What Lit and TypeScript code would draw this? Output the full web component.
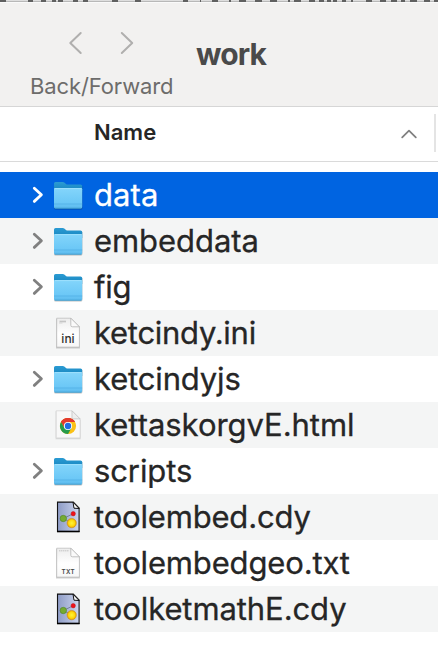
import { LitElement, html, css, svg } from "lit";
import { customElement, property } from "lit/decorators.js";

type Kind = "folder" | "ini" | "html" | "cdy" | "txt";
interface Entry { name: string; kind: Kind; spacing: number; selected?: boolean; }

const entries: Entry[] = [
  { name: "data", kind: "folder", spacing: 0.1, selected: true },
  { name: "embeddata", kind: "folder", spacing: -0.06 },
  { name: "fig", kind: "folder", spacing: -0.3 },
  { name: "ketcindy.ini", kind: "ini", spacing: -0.28 },
  { name: "ketcindyjs", kind: "folder", spacing: -0.15 },
  { name: "kettaskorgvE.html", kind: "html", spacing: -0.04 },
  { name: "scripts", kind: "folder", spacing: -0.1 },
  { name: "toolembed.cdy", kind: "cdy", spacing: -0.18 },
  { name: "toolembedgeo.txt", kind: "txt", spacing: -0.15 },
  { name: "toolketmathE.cdy", kind: "cdy", spacing: -0.09 },
];

// Start and end of each glyph foot peeking out above the window edge.
const feet = [[0,6],[28,33],[41,46],[52,56],[58,63],[73,78],[83,88],[112,118],[135,141],[183,188],[200,201],[212,218],[229,231],[239,246],[255,262],[270,277],[288,290],[294,301],[309,315],[319,324],[327,331],[333,337],[342,346],[351,353],[366,372],[380,386],[391,397],[401,405],[410,417],[424,430],[434,438]];

const folder = svg`
  <defs>
    <linearGradient id="front" x1="0" y1="0" x2="0" y2="1"><stop offset="0" stop-color="#83d5fb"/><stop offset=".75" stop-color="#6bc7f6"/><stop offset="1" stop-color="#5bb9ec"/></linearGradient>
    <linearGradient id="back" x1="0" y1="0" x2="0" y2="1"><stop offset="0" stop-color="#2b9bd3"/><stop offset="1" stop-color="#1684be"/></linearGradient>
  </defs>
  <path d="M4 9V31Q4 32.6 5.6 32.6H30.8Q32.4 32.6 32.4 31V9Z" fill="#000" opacity=".25"/>
  <path d="M4 6.6Q4 5 5.6 5H12.7Q13.8 5 14.6 5.7L16 6.9Q16.7 7.4 17.8 7.4H30.5Q32.2 7.4 32.2 9.1V15H4Z" fill="url(#back)"/>
  <path d="M4 12.3Q4 11.1 5.3 11.1H31Q32.2 11.1 32.2 12.3V30.1Q32.2 31.6 30.7 31.6H5.5Q4 31.6 4 30.1Z" fill="url(#front)"/>
  <path d="M4.5 11.6H31.7" stroke="#a4e2fc" stroke-width=".8"/>
  <path d="M4 27H32.2" stroke="#4dade2" stroke-width=".7"/>
  <path d="M5 31.2H31.2" stroke="#3c9bcd" stroke-width=".8"/>`;

const paper = svg`
  <defs><linearGradient id="page" x1="0" y1="0" x2="0" y2="1"><stop offset="0" stop-color="#ededed"/><stop offset=".55" stop-color="#fff"/><stop offset="1" stop-color="#f7f7f7"/></linearGradient></defs>
  <path d="M6 3.8H20.8L29.9 12.5V33.4H6Z" fill="#888" opacity=".4"/>
  <path d="M6.7 3.2H20.8L29.4 11.8V32.1H6.7Z" fill="url(#page)" stroke="#b9b9b9" stroke-width=".7"/>
  <path d="M20.8 3.2V10.3Q20.8 11.8 22.3 11.8H29.4Z" fill="#fafafa" stroke="#b4b4b4" stroke-width=".8"/>`;

const icons = {
  folder,
  ini: svg`${paper}<path d="M9.5 6.5H16" stroke="#c5c5c5" stroke-width="1.7"/><path d="M9 8H12.5" stroke="#d5d5d5" stroke-width="1"/><text class="ini" x="18" y="28" text-anchor="middle">ini</text>`,
  txt: svg`${paper}<path d="M9 5.8H19" stroke="#c4c4c4" stroke-width="1" stroke-dasharray="1.4 .5"/><text class="txt" x="18.2" y="28.7" text-anchor="middle">TXT</text>`,
  html: svg`
    <path d="M5.6 4.2H21.8L30.7 13V32.2H5.6Z" fill="#999" opacity=".3"/>
    <path d="M6.2 3.8H22L30.1 11.9V30.9H6.2Z" fill="#f8f8f8" stroke="#d2d2d2" stroke-width=".7"/>
    <path d="M22 3.8V10.7Q22 11.9 23.2 11.9H30.1Z" fill="#eee" stroke="#bbb" stroke-width=".7"/>
    <circle cx="18" cy="19" r="8.1" fill="#fbc116"/>
    <path d="M18 19L10.99 14.95A8.1 8.1 0 0 1 25.01 14.95H18Z" fill="#e33b2e"/>
    <path d="M18 14.95H25.01A8.1 8.1 0 0 0 10.99 14.95L14.5 21Z" fill="#e33b2e"/>
    <path d="M10.99 14.95A8.1 8.1 0 0 0 18 27.1L21.5 21L14.5 21Z" fill="#279b4b"/>
    <circle cx="18" cy="19" r="4.1" fill="#fff"/><circle cx="18" cy="19" r="3.2" fill="#226de3"/>`,
  cdy: svg`
    <defs>
      <linearGradient id="sheet"><stop offset="0" stop-color="#8d9bc5"/><stop offset="1" stop-color="#ccd5ee"/></linearGradient>
      <radialGradient id="sun"><stop offset="0" stop-color="#fff33b"/><stop offset=".65" stop-color="#ffd90b"/><stop offset="1" stop-color="#e69b00"/></radialGradient>
    </defs>
    <path d="M7.5 3.1H23.3L29.1 9V32.4H7.5Z" fill="url(#sheet)" stroke="#111" stroke-width="1.1"/>
    <path d="M7 32.6H29.6" stroke="#000" stroke-width="1.4"/>
    <path d="M23 3.2L24 9.2L29.1 9.5Z" fill="#fff" stroke="#111" stroke-width="1"/>
    <path d="M13.4 19.5L23.2 14.7M13.4 19.5L21.8 24" stroke="#77809e" stroke-width="1"/>
    <circle cx="13.3" cy="19.5" r="3.2" fill="#75ab31" stroke="#4f8326" stroke-width=".6"/>
    <circle cx="23.2" cy="14.7" r="2.2" fill="#ef1118" stroke="#b91923" stroke-width=".5"/>
    <circle cx="21.7" cy="24.1" r="4.7" fill="url(#sun)" stroke="#ca8d12" stroke-width=".5"/>`,
};

@customElement("file-row")
class FileRow extends LitElement {
  @property({ attribute: false }) entry!: Entry;
  static styles = css`
    :host { display: flex; align-items: center; height: 46px; background: #fff; color: #262626; }
    :host([striped]) { background: #f4f5f5; }
    :host([selected]) { background: #0064e1; color: #fff; }
    .disclosure { width: 18px; height: 24px; margin-left: 29px; margin-right: 3px; fill: none; stroke: #808080; stroke-width: 2.8; stroke-linecap: round; stroke-linejoin: round; }
    :host([selected]) .disclosure { stroke: #fff; }
    .hidden { visibility: hidden; }
    .icon { width: 36px; height: 36px; flex: none; }
    .name { margin-left: 8px; font: 400 31px/46px Inter, sans-serif; white-space: pre; -webkit-text-stroke: .3px currentColor; }
    .ini { font: 500 12px Inter, sans-serif; fill: #333; }
    .txt { font: 600 6.2px Inter, sans-serif; fill: #444; letter-spacing: .4px; }
  `;
  render() {
    const e = this.entry;
    return html`
      <svg class="disclosure ${e.kind === "folder" ? "" : "hidden"}" viewBox="0 0 18 24"><path d="M5.3 5.2L12.4 11.8L5.3 18.4"/></svg>
      <svg class="icon" viewBox="0 0 36 36">${icons[e.kind]}</svg>
      <span class="name" style="letter-spacing:${e.spacing}px">${e.name}</span>`;
  }
}

@customElement("app-root")
class AppRoot extends LitElement {
  static styles = css`
    :host { display: flex; flex-direction: column; height: 668px; overflow: hidden; background: #fff; font-family: Inter, sans-serif; }
    .behind { display: block; flex: none; width: 438px; height: 2px; background: linear-gradient(#dedede 50%, #b8b8b8 50%); fill: #606060; }
    .toolbar { box-sizing: border-box; height: 105px; flex: none; display: flex; background: #f2f1f0; border-top: 1px solid #fafafa; border-bottom: 1px solid #d6d6d6; }
    .nav { width: 144px; margin-left: 30px; padding-top: 27px; }
    .arrows { display: flex; justify-content: center; gap: 28px; padding-right: 3px; }
    .arrow { width: 24px; height: 26px; fill: none; stroke: #b0afae; stroke-width: 2; stroke-linecap: round; stroke-linejoin: round; }
    .label { font-size: 22px; line-height: 28px; margin-top: 16px; color: #6d6c6b; white-space: pre; letter-spacing: -.12px; }
    .title { margin-left: 22px; padding-top: 31px; font-size: 30px; line-height: 40px; font-weight: 700; letter-spacing: -.9px; color: #4a4a4a; }
    .header { box-sizing: border-box; height: 55px; flex: none; display: flex; align-items: center; padding-left: 94px; border-bottom: 1px solid #dadada; }
    .column { flex: 1; font-size: 22px; font-weight: 600; color: #262626; line-height: 30px; margin-top: -4px; }
    .sort { width: 18px; height: 12px; margin-right: 16px; fill: none; stroke: #808080; stroke-width: 1.8; stroke-linecap: round; stroke-linejoin: round; }
    .divider { width: 2px; height: 38px; margin-top: -2px; margin-right: 2px; background: #e4e4e4; }
    .list { padding-top: 10px; }
  `;
  render() {
    return html`
      <svg class="behind" viewBox="0 0 438 2">${feet.map(([a, b]) => svg`<rect x=${a} y="0" width=${b - a} height="2"/>`)}</svg>
      <div class="toolbar">
        <div class="nav">
          <div class="arrows">
            <svg class="arrow" viewBox="0 0 24 26"><path d="M17.7 3L7.3 13L17.7 23"/></svg>
            <svg class="arrow" viewBox="0 0 24 26"><path d="M6.8 3L17.2 13L6.8 23"/></svg>
          </div>
          <div class="label">Back/Forward</div>
        </div>
        <div class="title">work</div>
      </div>
      <div class="header">
        <span class="column">Name</span>
        <svg class="sort" viewBox="0 0 18 12"><path d="M2.2 9.3L9 2.7L15.8 9.3"/></svg>
        <span class="divider"></span>
      </div>
      <div class="list">
        ${entries.map((e, i) => html`<file-row .entry=${e} ?selected=${!!e.selected} ?striped=${i % 2 === 1}></file-row>`)}
      </div>`;
  }
}
